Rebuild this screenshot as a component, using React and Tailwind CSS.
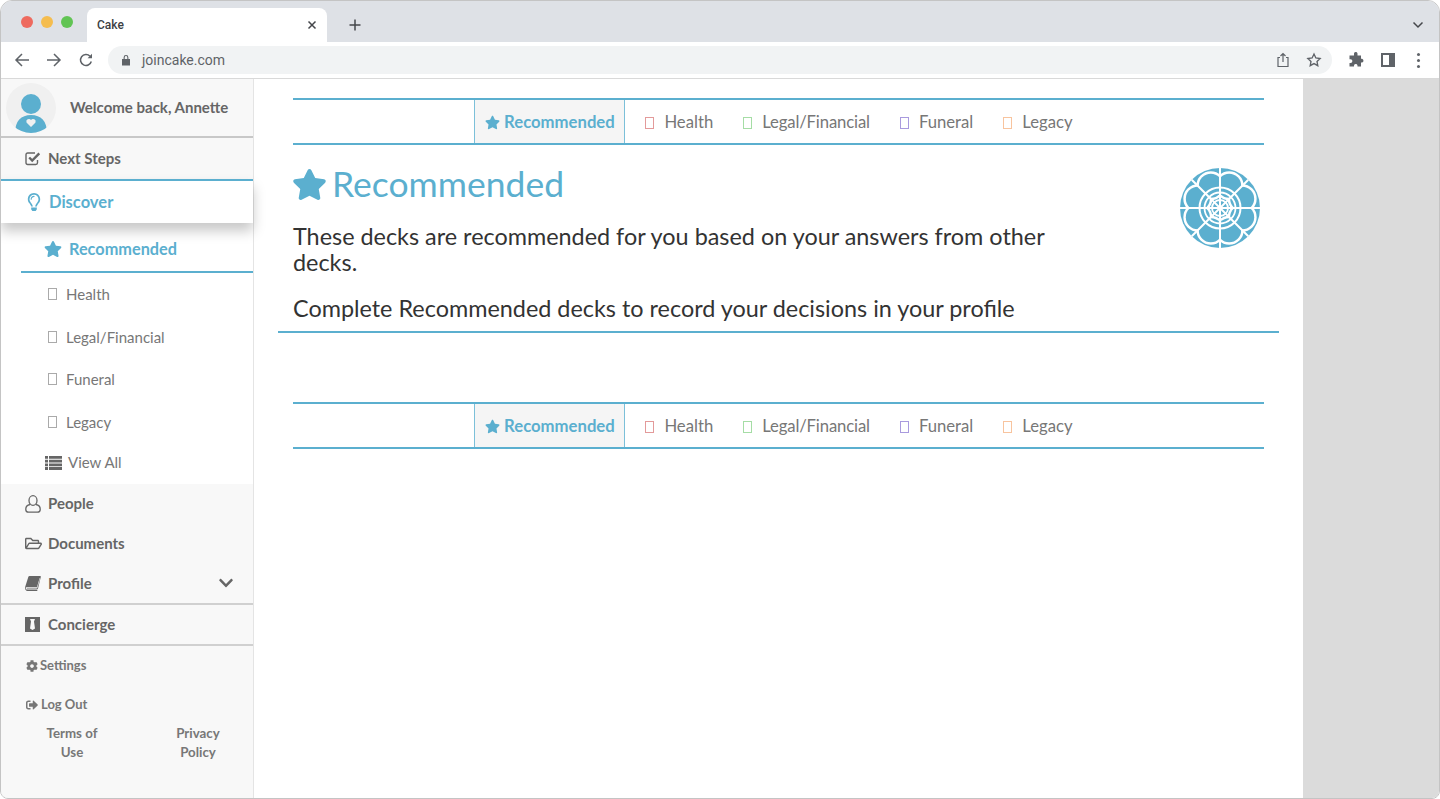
import { FaRegLightbulb, FaStar, FaRegFolderOpen, FaChevronDown, FaCog, FaSignOutAlt } from "react-icons/fa";

const tabs = [
  { label: "Health", box: "border-[#e39a9a]", text: "" },
  { label: "Legal/Financial", box: "border-[#a5dda5]", text: "tracking-[-0.14px]" },
  { label: "Funeral", box: "border-[#a99ade]", text: "" },
  { label: "Legacy", box: "border-[#f8c49e]", text: "" },
];

function ChromeBar() {
  return (
    <div className="shrink-0">
      <div className="h-[41px] bg-[#dee1e6] flex items-end pl-[86px] pr-4 relative">
        <div className="absolute left-[20px] top-[15px] flex gap-2">
          <span className="w-3 h-3 rounded-full bg-[#ee6a5f]"></span>
          <span className="w-3 h-3 rounded-full bg-[#f5bd4f]"></span>
          <span className="w-3 h-3 rounded-full bg-[#61c454]"></span>
        </div>
        <div className="w-[240px] h-[34px] bg-white rounded-t-lg flex items-center justify-between pl-[10px] pr-[9px]">
          <span className="text-[12px] text-[#3c4043] font-['Roboto',sans-serif] font-medium">Cake</span>
          <svg width="12" height="12" viewBox="0 0 12 12" stroke="#45474b" strokeWidth="1.5" fill="none">
            <path d="M2.5 2.5l7 7M9.5 2.5l-7 7" />
          </svg>
        </div>
        <svg className="ml-[20px] mb-[9px]" width="16" height="16" viewBox="0 0 16 16" stroke="#45474b" strokeWidth="1.5" fill="none">
          <path d="M8 2.5v11M2.5 8h11" />
        </svg>
        <svg className="absolute right-[15px] top-[19px]" width="12" height="10" viewBox="0 0 12 10" stroke="#45474b" strokeWidth="1.5" fill="none">
          <path d="M1.5 2.5L6 7l4.5-4.5" />
        </svg>
      </div>
      <div className="h-[37px] bg-white border-b border-[#d9d9d9] flex items-center pl-[13px] pr-[14px]">
        <svg width="16" height="16" viewBox="0 0 16 16" stroke="#5f6368" strokeWidth="1.5" fill="none">
          <path d="M15 8H2M8 2L2 8l6 6" />
        </svg>
        <svg className="ml-[16px]" width="16" height="16" viewBox="0 0 16 16" stroke="#5f6368" strokeWidth="1.5" fill="none">
          <path d="M1 8h13M8 2l6 6-6 6" />
        </svg>
        <svg className="ml-[17px]" width="14" height="14" viewBox="0 0 14 14" stroke="#5f6368" strokeWidth="1.5" fill="none">
          <path d="M12.3 8.5A5.5 5.5 0 1 1 11 3.2" />
          <path d="M13 .8v4.400H8.600" fill="#5f6368" stroke="none" />
        </svg>
        <div className="ml-[15px] w-[1224px] h-[28px] rounded-full bg-[#f1f3f4] flex items-center pl-[13px] pr-[10px]">
          <svg width="10" height="12" viewBox="0 0 10 12" fill="#5f6368">
            <path d="M1 5h8v6.500H1zM2.600 5V3.400a2.400 2.400 0 0 1 4.800 0V5H6.300V3.400a1.300 1.300 0 0 0-2.600 0V5z" />
          </svg>
          <span className="ml-[11px] text-[14px] text-[#5f6368] font-['Roboto',sans-serif]">joincake.com</span>
          <svg className="ml-auto" width="14" height="16" viewBox="0 0 14 16" stroke="#5f6368" strokeWidth="1.2" fill="none">
            <path d="M4 5.500H2v9h10v-9h-2M7 10V1.500M4.500 4L7 1.500 9.500 4" />
          </svg>
          <svg className="ml-[16px]" width="16" height="16" viewBox="0 0 24 24" stroke="#5f6368" strokeWidth="2" fill="none">
            <path d="M12 3l2.800 5.900 6.400.8-4.700 4.400 1.200 6.400-5.700-3.100-5.700 3.100 1.200-6.400L2.800 9.700l6.400-.8z" />
          </svg>
        </div>
        <svg className="ml-[16px]" width="16" height="16" viewBox="0 0 16 16" fill="#5f6368">
          <path d="M6 1.500a1.800 1.800 0 0 1 3.500 0V3.500H13v3.300h1a1.900 1.900 0 0 1 0 3.700h-1V14.500H9.500v-1a1.800 1.800 0 0 0-3.500 0v1H1.500V11h1a1.900 1.900 0 0 0 0-3.800h-1V3.500H6z" />
        </svg>
        <svg className="ml-[17px]" width="14" height="14" viewBox="0 0 14 14" fill="none" stroke="#5f6368" strokeWidth="2">
          <path d="M1 1h12v12H1z" />
          <path d="M10 1v12" strokeWidth="4" />
        </svg>
        <div className="ml-[22px] flex flex-col gap-[3px]">
          <span className="w-[3px] h-[3px] rounded-full bg-[#5f6368]"></span>
          <span className="w-[3px] h-[3px] rounded-full bg-[#5f6368]"></span>
          <span className="w-[3px] h-[3px] rounded-full bg-[#5f6368]"></span>
        </div>
      </div>
    </div>
  );
}

function Avatar() {
  return (
    <div className="w-[50px] h-[50px] rounded-full bg-[#f0f0f0] flex items-end justify-center overflow-hidden">
      <svg width="32" height="40" viewBox="0 0 32 40">
        <circle cx="16" cy="11" r="10" fill="#5bafcf" />
        <path d="M0 40c0-12 6-18 16-18s16 6 16 18z" fill="#5bafcf" />
        <path d="M16 34l-4.500-4.500a2.600 2.600 0 0 1 4.500-2.500 2.600 2.600 0 0 1 4.500 2.500z" fill="#f0f0f0" />
      </svg>
    </div>
  );
}

function CheckIcon() {
  return (
    <svg width="16" height="15" viewBox="0 0 16 15" fill="none" stroke="#666">
      <path d="M12.500 9v2.800c0 1-.7 1.700-1.700 1.700H2.700c-1 0-1.700-.7-1.700-1.700V3.700C1 2.700 1.700 2 2.700 2h7.300" strokeWidth="1.400" />
      <path d="M4.200 6.500l3 3L14.300 2.300" strokeWidth="2.400" />
    </svg>
  );
}

function ConciergeIcon() {
  return (
    <svg width="15" height="15" viewBox="0 0 15 15">
      <path d="M0 0h15v15H0z" fill="#666" />
      <path d="M5 2h5l-1 2.500 1 7-2.500 1.500L5 11.500l1-7z" fill="#f8f8f8" />
    </svg>
  );
}

function PersonIcon() {
  return (
    <svg width="16" height="18" viewBox="0 0 16 18" fill="none" stroke="#666" strokeWidth="1.300">
      <ellipse cx="8" cy="5.500" rx="4" ry="4.800" />
      <path d="M5 9.500C2.500 10 .8 11.500.8 14v.5c0 1.500 1 2.700 2.700 2.700h9c1.700 0 2.700-1.200 2.700-2.700V14c0-2.500-1.700-4-4.200-4.500" />
    </svg>
  );
}

function BookIcon() {
  return (
    <svg width="16" height="15" viewBox="0 0 16 15" fill="#666">
      <path d="M4.500 0H15c.6 0 1 .5.800 1L13 12.500c-.2.600-.6 1-1.300 1H2.500C1.800 13.500 1.600 13 1.800 12.400h9.500c.6 0 1-.3 1.200-.9L15 2.500 14.600 2 12 11.200H1.200C.9 11.200.6 11.600.7 12.100c.2.900.7 2 1.800 2h9.800v.9H2.500C1 15 0 13.500 0 12c0-.5.1-1 .3-1.500L3.300 1C3.500.4 3.900 0 4.500 0z" />
    </svg>
  );
}

function ListIcon() {
  return (
    <svg width="17" height="14" viewBox="0 0 17 14" fill="#666">
      <path d="M0 0h3v2.800H0zM4 0h13v2.800H4zM0 3.700h3v2.800H0zM4 3.700h13v2.800H4zM0 7.400h3v2.800H0zM4 7.400h13v2.800H4zM0 11.100h3v2.800H0zM4 11.100h13v2.800H4z" />
    </svg>
  );
}

function NavRow({ icon, label, className = "" }) {
  return (
    <div className={`flex items-center pl-[24px] text-[15px] font-bold text-[#666] ${className}`}>
      <span className="w-[23px] flex items-center text-[#666]">{icon}</span>
      <span>{label}</span>
    </div>
  );
}

function SubRow({ label }) {
  return (
    <div className="h-[42.500px] flex items-center pl-[47px] text-[15px] text-[#777]">
      <span className="w-[9px] h-[12px] border border-[#aaa] mr-[9px]"></span>
      {label}
    </div>
  );
}

function Sidebar() {
  return (
    <div className="w-[253px] shrink-0 bg-[#f8f8f8] border-r border-[#e4e4e4] flex flex-col">
      <div className="h-[59px] flex items-center pl-[5px] border-b-2 border-[#c8c8c8]">
        <Avatar />
        <span className="ml-[14px] text-[15px] font-bold text-[#666]">Welcome back, Annette</span>
      </div>
      <NavRow className="h-[41px]" icon={<CheckIcon />} label="Next Steps" />
      <div className="relative z-10 h-[44px] bg-white border-t-2 border-[#5bafcf] flex items-center pl-[24px] text-[16.5px] font-bold text-[#5bafcf] shadow-[0_8px_12px_rgba(0,0,0,0.22)]">
        <span className="w-[24px] flex items-center"><FaRegLightbulb size={18} /></span>
        Discover
      </div>
      <div className="bg-white h-[261px] flex flex-col">
        <div className="shrink-0 ml-[20px] h-[50px] pt-[4px] border-b-2 border-[#5bafcf] flex items-center pl-[23px] text-[16.300px] font-bold text-[#5bafcf]">
          <FaStar size={18} />
          <span className="ml-[7px]">Recommended</span>
        </div>
        <SubRow label="Health" />
        <SubRow label="Legal/Financial" />
        <SubRow label="Funeral" />
        <SubRow label="Legacy" />
        <div className="h-[39px] flex items-center pl-[44px] text-[15px] text-[#777]">
          <ListIcon />
          <span className="ml-[6px]">View All</span>
        </div>
      </div>
      <NavRow className="h-[39px]" icon={<PersonIcon />} label="People" />
      <NavRow className="h-[40px]" icon={<FaRegFolderOpen size={17} />} label="Documents" />
      <div className="h-[42px] flex items-center justify-between pr-[19px] border-b-2 border-[#d0d0d0]">
        <NavRow icon={<BookIcon />} label="Profile" />
        <FaChevronDown size={16} className="text-[#666]" />
      </div>
      <NavRow className="h-[41px] border-b-2 border-[#d0d0d0]" icon={<ConciergeIcon />} label="Concierge" />
      <div className="pl-[25px] h-[40px] flex items-center text-[13px] font-bold text-[#777]">
        <FaCog size={12} />
        <span className="ml-[2px]">Settings</span>
      </div>
      <div className="pl-[25px] h-[38px] flex items-center text-[13px] font-bold text-[#777]">
        <FaSignOutAlt size={12} />
        <span className="ml-[3px]">Log Out</span>
      </div>
      <div className="flex text-[13.300px] font-bold text-[#777] text-center leading-[19px]">
        <div className="w-[126px] pl-[37px] pr-[21px]">Terms of Use</div>
        <div className="w-[126px] pl-[37px] pr-[21px]">Privacy Policy</div>
      </div>
    </div>
  );
}

function TabNav() {
  return (
    <div className="h-[47px] mx-[15px] border-y-2 border-[#5bafcf] flex justify-center text-[16.700px] text-[#777]">
      <div className="w-[151px] pt-[2px] bg-[#f5f5f5] border-x border-[#7cc0d9] flex items-center justify-center text-[#5bafcf] font-bold">
        <FaStar size={15} />
        <span className="ml-[4px]">Recommended</span>
      </div>
      {tabs.map((t) => (
        <div key={t.label} className={`flex items-center pt-[2px] pl-[20px] pr-[10px] ${t.text}`}>
          <span className={`w-[9px] h-[12px] border ${t.box} mr-[10px]`}></span>
          {t.label}
        </div>
      ))}
    </div>
  );
}

function Logo() {
  const spokes = [0, 45, 90, 135];
  const petals = [22.5, 67.5, 112.5, 157.5, 202.5, 247.5, 292.5, 337.5].map((a) => ({
    a,
    x: 24 * Math.cos((a * Math.PI) / 180),
    y: 24 * Math.sin((a * Math.PI) / 180),
  }));
  return (
    <svg width="80" height="80" viewBox="-40 -40 80 80" className="shrink-0">
      <circle r="40" fill="#5bafcf" />
      {/* outline pass, then fill pass, so only the outer edge of the flower stays white */}
      {petals.map((p) => (
        <circle key={p.a} cx={p.x} cy={p.y} r="12" fill="none" stroke="#fff" strokeWidth="5" />
      ))}
      {petals.map((p) => (
        <circle key={p.a} cx={p.x} cy={p.y} r="12" fill="#5bafcf" />
      ))}
      <circle r="20.500" fill="none" stroke="#fff" strokeWidth="2" />
      <circle r="15.500" fill="none" stroke="#fff" strokeWidth="1.800" />
      <circle r="8" fill="none" stroke="#fff" strokeWidth="1.800" />
      {spokes.map((a) => (
        <line key={a} x1="-40" y1="0" x2="40" y2="0" stroke="#fff" strokeWidth="2" transform={`rotate(${a})`} />
      ))}
    </svg>
  );
}

function Main() {
  return (
    <div className="w-[1049px] shrink-0 bg-white pt-[19px] pl-[24px] pr-[24px]">
      <TabNav />
      <div className="border-b-2 border-[#5bafcf] h-[188px] px-[15px] flex justify-between">
        <div className="w-[770px]">
          <div className="flex items-center mt-[19px] text-[35.500px] leading-[40px] text-[#5bafcf]">
            <FaStar size={35} className="-ml-[1px]" />
            <span className="ml-[5px]">Recommended</span>
          </div>
          <p className="mt-[19px] text-[23.400px] leading-[26px] text-[#333]">These decks are recommended for you based on your answers from other decks.</p>
          <p className="mt-[20px] text-[23.400px] leading-[26px] text-[#333] whitespace-nowrap">Complete Recommended decks to record your decisions in your profile</p>
        </div>
        <div className="mt-[23px] mr-[4px]"><Logo /></div>
      </div>
      <div className="h-[69px]"></div>
      <TabNav />
    </div>
  );
}

export default function App() {
  return (
    <div className="w-[1440px] h-[799px] overflow-hidden bg-white font-['Lato',sans-serif]">
      <div className="h-full rounded-t-xl rounded-b-lg overflow-hidden border border-[#c4c4c4] flex flex-col">
        <ChromeBar />
        <div className="flex-1 flex min-h-0 bg-[#dbdbdb]">
          <Sidebar />
          <Main />
        </div>
      </div>
    </div>
  );
}
